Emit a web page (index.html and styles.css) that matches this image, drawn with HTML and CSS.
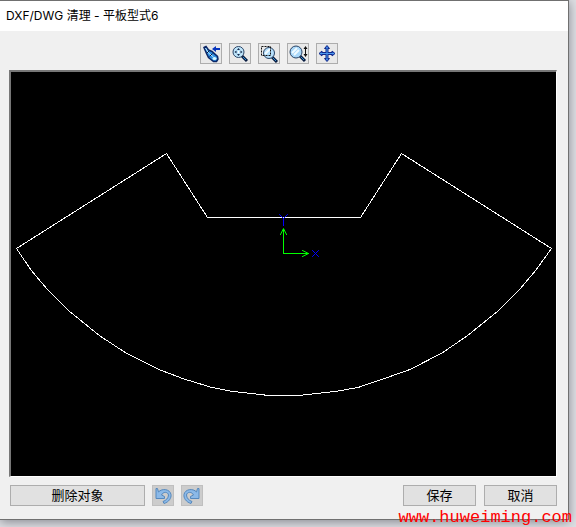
FILE: index.html
```html
<!DOCTYPE html>
<html lang="zh-CN">
<head>
<meta charset="utf-8">
<title>DXF/DWG 清理 - 平板型式6</title>
<link rel="stylesheet" href="styles.css">
</head>
<body>
<main class="dialog">
  <header class="titlebar"><h1>DXF/DWG 清理 - 平板型式6</h1></header>
  <div class="content">
    <div class="toolbar" role="toolbar" aria-label="视图">
      <button class="tool" type="button" aria-label="上一视图">
        <svg viewBox="0 0 20 19">
          <path d="M3 3.500L5 2.500L7.500 6L11 7.500L16.500 12.500L17 15L15.500 17.500L12.500 17.500L7.500 13.500L5.500 9.500Z" fill="#2f8fe0" stroke="#0b2666" stroke-width="1.500"/>
          <path d="M4.500 4l3 5 5 4" stroke="#c5efff" fill="none"/>
          <path d="M5.500 9.500l3-3M8.500 12.500l3-3" stroke="#071846" fill="none"/>
          <ellipse cx="13.500" cy="14.500" rx="2" ry="1.500" fill="#d5f7ff"/>
          <path d="M11 5l4-3v2h4v2h-4v2z" fill="#0734bd"/>
        </svg>
      </button>
      <button class="tool" type="button" aria-label="整屏显示全图">
        <svg viewBox="0 0 20 19">
          <path d="M12 12l5 5" stroke="#081c40" stroke-width="3"/><path d="M13 13l3 3" stroke="#338fd4"/>
          <circle cx="8.500" cy="8" r="5.500" fill="#bee5fb" stroke="#2c4566"/>
          <path d="M8.500 4l1.500 2H7zM8.500 12l1.500-2H7zM4.500 8l2-1.500v3zM12.500 8l-2-1.500v3z" fill="#14294b"/>
          <path d="M8 7h1v2H8z" fill="#fff"/>
        </svg>
      </button>
      <button class="tool" type="button" aria-label="局部放大">
        <svg viewBox="0 0 20 19">
          <path d="M13 13l5 5" stroke="#081c40" stroke-width="3"/><path d="M14 14l3 3" stroke="#338fd4"/>
          <circle cx="10" cy="9" r="5.500" fill="#b5dffb" stroke="#2c4566"/>
          <path d="M6 10l5-5" stroke="#f3fcff" stroke-width="2"/>
          <path d="M2.500 2.500H11.500V11.500H2.500Z" fill="none" stroke="#111" stroke-dasharray="2 1"/>
        </svg>
      </button>
      <button class="tool" type="button" aria-label="放大或缩小">
        <svg viewBox="0 0 20 19">
          <path d="M12 12l5 5" stroke="#081c40" stroke-width="3"/><path d="M13 13l3 3" stroke="#338fd4"/>
          <circle cx="8" cy="8" r="6" fill="#a9d8fa" stroke="#2c4566"/>
          <path d="M4 9l5-5M6 11l5-5" stroke="#eefaff" stroke-width="2"/>
          <path d="M17.500 3v9" stroke="#111"/><path d="M17.500 2l2 3h-4zM17.500 13l2-3h-4z" fill="#111"/>
        </svg>
      </button>
      <button class="tool" type="button" aria-label="平移">
        <svg viewBox="0 0 20 19">
          <path d="M10 3v13M3.500 9.500h13" stroke="#10298a" stroke-width="3"/>
          <path d="M10 1.500l2.500 3h-5zM10 17.500l2.500-3h-5zM2 9.500l3-2.500v5zM18 9.500l-3-2.500v5z" fill="#2e70df" stroke="#10298a"/>
          <path d="M10 3v13M3 9.500h14" stroke="#4b98ee"/>
        </svg>
      </button>
    </div>
    <div class="viewport">
      <svg class="drawing" viewBox="11 72 545 404" role="img" aria-label="平板型式轮廓">
        <path class="outline" d="M166.500 153.500L207.500 217.500H360.500L401.500 153.500L551.500 248.500L536 270L520 289L498 311L467 336L442 353L410 369.500L383 379L358 387.500L335 391.500L299 395.500H269L233 391.500L212 387.500L184 379L159 369.500L126 353L100 336L69 311L47 289L31 270L16.500 248.500Z"/>
        <path class="axis" d="M283.500 229.500V253.500M283.500 253.500H308.500M280.500 234.500L283.500 228.500L286.500 234.500M302.500 250.500L308.500 253.500L302.500 256.500"/>
        <path class="axis-name" d="M283.500 225.500V218.500M279.500 214.500L283.500 218.500M287.500 214.500L283.500 218.500M312.500 250.500L318.500 256.500M318.500 250.500L312.500 256.500"/>
      </svg>
    </div>
    <footer class="actions">
      <button class="action delete" type="button">删除对象</button>
      <button class="tool history" type="button" aria-label="撤消" disabled>
        <svg viewBox="0 0 20 19"><path d="M3 2.500V12.500H11.500V10.500L8.500 9C10 5.500 15 5.500 15.500 9C15.500 12 13 14.500 10 15.500L11 17.500C16 16 18.500 12 18 8.500C17 3 9 2 5.500 6L4.500 2.500Z" fill="#8bb9e8" stroke="#5588bd"/></svg>
      </button>
      <button class="tool history" type="button" aria-label="重做" disabled>
        <svg viewBox="0 0 20 19"><path d="M17 2.500V12.500H8.500V10.500L11.500 9C10 5.500 5 5.500 4.500 9C4.500 12 7 14.500 10 15.500L9 17.500C4 16 1.500 12 2 8.500C3 3 11 2 14.500 6L15.500 2.500Z" fill="#8bb9e8" stroke="#5588bd"/></svg>
      </button>
      <div class="confirm">
        <button class="action" type="button">保存</button>
        <button class="action" type="button">取消</button>
      </div>
    </footer>
  </div>
</main>
<div class="watermark">www.huweiming.com</div>
</body>
</html>
```
FILE: styles.css
```css
* { box-sizing: border-box; }

body {
  margin: 0;
  min-height: 100vh;
  overflow: hidden;
  background: #dedfe3;
  font-family: Inter, "Noto Sans CJK SC", sans-serif;
  color: #000;
}

.dialog {
  margin-right: 7px;
  border: solid #707070;
  border-width: 1px 1px 1px 0;
  background: #f0f0f0;
  box-shadow: 0 2px 10px #85878f;
}

.titlebar {
  height: 30px;
  padding-left: 6px;
  background: #fff;
}

.titlebar h1 {
  margin: 0;
  font-size: 12px;
  font-weight: 400;
  line-height: 30px;
}

.content { padding: 12px 11px 13px 9px; }

.toolbar {
  display: flex;
  justify-content: center;
  gap: 7px;
  padding-right: 28px;
  margin-bottom: 6px;
}

.tool {
  width: 22px;
  height: 21px;
  padding: 0;
  border: 1px solid #adadad;
  background: #e9e9e9;
}

.tool svg {
  display: block;
  width: 100%;
  height: 100%;
}

.viewport {
  border: solid;
  border-width: 2px 1px 1px 2px;
  border-color: #777 #fff #fff #777;
  background: #000;
}

.drawing {
  display: block;
  width: 100%;
  height: auto;
  fill: none;
  stroke-linecap: square;
}

.outline {
  stroke: #fff;
  shape-rendering: crispEdges;
}

.axis { stroke: #0f0; }
.axis-name { stroke: #00f; }

.actions {
  display: flex;
  gap: 7px;
  padding: 8px 0 0 1px;
}

.action {
  width: 73px;
  height: 21px;
  padding: 0 0 2px;
  border: 1px solid #adadad;
  background: #e1e1e1;
  font: 13px/17px "Noto Sans CJK SC", sans-serif;
  color: #000;
}

.delete { width: 135px; }
.history { background: #ccc; border-color: #bfbfbf; }

.confirm {
  display: flex;
  gap: 8px;
  margin-left: auto;
}

.watermark {
  position: absolute;
  right: 4px;
  bottom: 0;
  font: 17px/18px "Liberation Mono", monospace;
  color: #f00;
}
```
